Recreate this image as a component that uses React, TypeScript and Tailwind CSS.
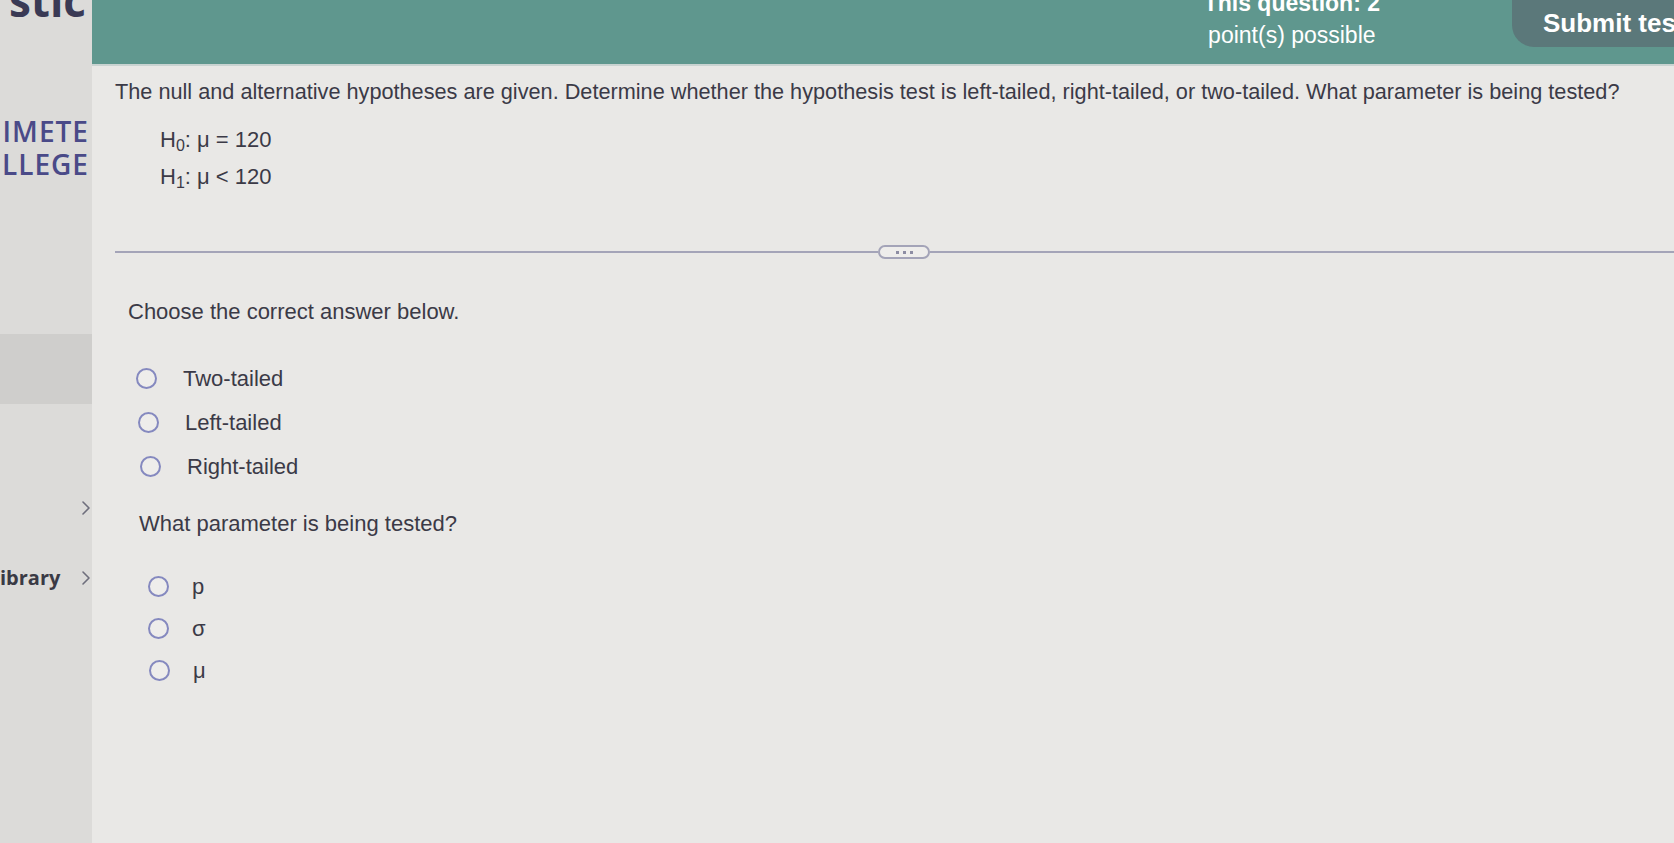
import React from "react";

function Radio() {
  return (
    <span className="inline-block h-[21px] w-[21px] shrink-0 rounded-full border-[2.5px] border-[#8589bf] bg-[#eeedeb]" />
  );
}

function Chevron() {
  return (
    <svg width="12" height="18" viewBox="0 0 12 18" fill="none" className="shrink-0">
      <path d="M3 3 L9 9 L3 15" stroke="#6e6e7c" strokeWidth="1.6" strokeLinecap="round" strokeLinejoin="round" />
    </svg>
  );
}

function Option({ label, x, labelGap, h }: { label: React.ReactNode; x: number; labelGap: string; h: string }) {
  return (
    <div className={`flex ${h} items-center`} style={{ paddingLeft: x }}>
      <Radio />
      <span className={`${labelGap} text-[22px] text-[#3b3a47]`}>{label}</span>
    </div>
  );
}

export default function App() {
  return (
    <div
      className="flex h-[843px] w-[1674px] overflow-hidden bg-[#e9e8e6]"
      style={{ fontFamily: '"Liberation Sans", Arial, sans-serif' }}
    >
      {/* left sidebar */}
      <aside className="flex w-[92px] shrink-0 flex-col overflow-hidden bg-[#dcdbd9]">
        <div
          className="-mt-[25px] h-[50px] overflow-hidden text-right text-[44px] font-bold leading-[50px] text-[#3a3a55]"
          style={{ fontFamily: '"Open Sans", sans-serif' }}
        >
          <span className="mr-[6px]">stic</span>
        </div>
        <div
          className="mt-[90px] flex flex-col items-end pr-[3px] text-[28px] font-semibold leading-[33px] tracking-[1px] text-[#4a4a88]"
          style={{ fontFamily: '"Open Sans", sans-serif' }}
        >
          <span className="leading-[33px]">IMETE</span>
          <span className="whitespace-nowrap leading-[33px]">LLEGE</span>
        </div>
        <div className="mt-[153px] h-[70px] bg-[#cfcecc]" />
        <div className="mt-[95px] flex justify-end pr-[0px]">
          <Chevron />
        </div>
        <div className="mt-[46px] flex items-center justify-between pr-[0px]">
          <span className="text-[20px] font-bold text-[#3a3a45]" style={{ fontFamily: '"Open Sans", sans-serif' }}>
            ibrary
          </span>
          <Chevron />
        </div>
      </aside>

      {/* main */}
      <main className="flex flex-1 flex-col">
        <header className="flex h-[64px] shrink-0 items-start justify-end bg-[#5f978e] shadow-[0_2px_0_#c9d3d1]">
          <div className="mr-[132px] -mt-[13px] flex flex-col items-center text-[23px] leading-[32px] text-white">
            <span className="font-semibold">This question: 2</span>
            <span>point(s) possible</span>
          </div>
          <div className="flex h-[47px] w-[162px] items-center overflow-hidden whitespace-nowrap rounded-bl-[22px] bg-[#5b787a] pl-[31px] text-[26px] font-bold text-white">
            Submit tes
          </div>
        </header>

        <section className="flex flex-col pl-[23px]">
          <p className="mt-[16px] whitespace-nowrap text-[21.7px] leading-[24px] text-[#3b3a47]">
            The null and alternative hypotheses are given. Determine whether the hypothesis test is left-tailed, right-tailed, or two-tailed. What parameter is being tested?
          </p>
          <div className="mt-[17px] flex flex-col pl-[45px] text-[22px] leading-[37px] text-[#3b3a47]">
            <span>
              H<sub className="text-[16px]">0</sub>: μ = 120
            </span>
            <span>
              H<sub className="text-[16px]">1</sub>: μ &lt; 120
            </span>
          </div>
        </section>

        <div className="mt-[50px] flex items-center">
          <div className="ml-[23px] h-[2px] w-[763px] bg-[#a4a4b8]" />
          <div className="flex h-[14px] w-[52px] items-center justify-center gap-[4px] rounded-full border-2 border-[#a4a4b8] bg-[#eeedeb]">
            <span className="h-[3px] w-[3px] bg-[#8d8da3]" />
            <span className="h-[3px] w-[3px] bg-[#8d8da3]" />
            <span className="h-[3px] w-[3px] bg-[#8d8da3]" />
          </div>
          <div className="h-[2px] flex-1 bg-[#a4a4b8]" />
        </div>

        <p className="ml-[36px] mt-[41px] text-[22px] leading-[24px] text-[#3b3a47]">Choose the correct answer below.</p>

        <div className="mt-[32px] flex flex-col">
          <Option label="Two-tailed" x={44} labelGap="ml-[26px]" h="h-[44px]" />
          <Option label="Left-tailed" x={46} labelGap="ml-[26px]" h="h-[44px]" />
          <Option label="Right-tailed" x={48} labelGap="ml-[26px]" h="h-[44px]" />
        </div>

        <p className="ml-[47px] mt-[24px] text-[22px] leading-[24px] text-[#3b3a47]">What parameter is being tested?</p>

        <div className="mt-[29px] flex flex-col">
          <Option label="p" x={56} labelGap="ml-[23px]" h="h-[42px]" />
          <Option label="σ" x={56} labelGap="ml-[23px]" h="h-[42px]" />
          <Option label="μ" x={57} labelGap="ml-[23px]" h="h-[42px]" />
        </div>
      </main>
    </div>
  );
}
